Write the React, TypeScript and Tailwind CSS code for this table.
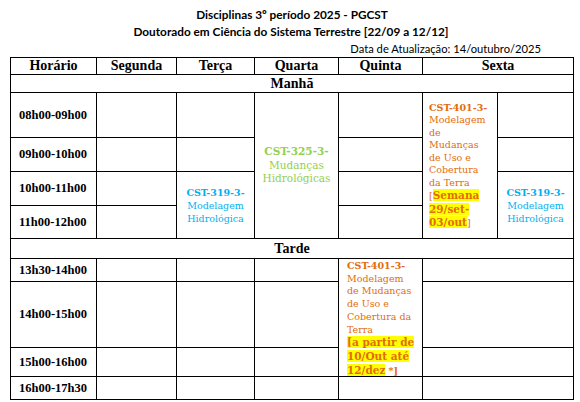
const serif = "font-['Liberation_Serif',serif]";
const slab = "font-['DejaVu_Serif',serif]";

function Cell({ children, className = "" }: { children?: React.ReactNode; className?: string }) {
  return <div className={`bg-white ${className}`}>{children}</div>;
}

function Time({ label }: { label: string }) {
  return (
    <Cell className={`flex items-center pl-[8px] ${serif} font-bold text-[12.5px] text-black`}>
      {label}
    </Cell>
  );
}

function Head({ label, className = "" }: { label: string; className?: string }) {
  return (
    <Cell className={`flex items-center justify-center ${serif} font-bold text-[14px] leading-none text-black ${className}`}>
      {label}
    </Cell>
  );
}

const hl = "bg-[#ffff00] font-bold text-[10.5px]";

export default function App() {
  return (
    <div className="w-[580px] h-[402px] bg-white overflow-hidden">
      {/* TITLES */}
      <div className="pt-[6px] font-['Lato',sans-serif] leading-[17px] text-black">
        <div className="text-center font-bold text-[11.8px] pl-[4px]">Disciplinas 3º período 2025 - PGCST</div>
        <div className="text-center font-bold text-[11.8px] pl-[2px]">Doutorado em Ciência do Sistema Terrestre [22/09 a 12/12]</div>
        <div className="text-right text-[11.2px] pr-[39px]">Data de Atualização: 14/outubro/2025</div>
      </div>

      {/* TABLE */}
      <div className="ml-[10px] w-[564px] grid grid-cols-[85px_79px_77px_83px_83px_74px_75px] grid-rows-[16px_17px_44px_33px_33px_32px_19px_22px_65px_28px_22px] gap-px bg-black border border-black">
        <Head label="Horário" />
        <Head label="Segunda" />
        <Head label="Terça" />
        <Head label="Quarta" />
        <Head label="Quinta" />
        <Head label="Sexta" className="col-span-2" />

        <Head label="Manhã" className="col-span-7" />

        {/* 08h */}
        <Time label="08h00-09h00" />
        <Cell />
        <Cell />
        <Cell className={`row-span-4 flex flex-col items-center justify-center text-center ${slab} text-[10.5px] leading-[13.5px] text-[#92d050]`}>
          <span className="font-bold">CST-325-3-</span>
          <span>Mudanças</span>
          <span>Hidrológicas</span>
        </Cell>
        <Cell />
        <Cell className={`row-span-4 flex flex-col justify-center pl-[6px] ${slab} text-[9.5px] leading-[12.5px] text-[#e36c0a]`}>
          <span className="font-bold">CST-401-3-</span>
          <span>Modelagem</span>
          <span>de</span>
          <span>Mudanças</span>
          <span>de Uso e</span>
          <span>Cobertura</span>
          <span>da Terra</span>
          <span>[<span className={hl}>Semana</span></span>
          <span><span className={hl}>29/set-</span></span>
          <span><span className={hl}>03/out</span>]</span>
        </Cell>
        <Cell />

        {/* 09h */}
        <Time label="09h00-10h00" />
        <Cell />
        <Cell />
        <Cell />
        <Cell />

        {/* 10h */}
        <Time label="10h00-11h00" />
        <Cell />
        <Cell className={`row-span-2 flex flex-col items-center justify-center text-center ${slab} text-[9.5px] leading-[13px] text-[#00b0f0]`}>
          <span className="font-bold">CST-319-3-</span>
          <span>Modelagem</span>
          <span>Hidrológica</span>
        </Cell>
        <Cell />
        <Cell className={`row-span-2 flex flex-col items-center justify-center text-center ${slab} text-[9.5px] leading-[13px] text-[#00b0f0]`}>
          <span className="font-bold">CST-319-3-</span>
          <span>Modelagem</span>
          <span>Hidrológica</span>
        </Cell>

        {/* 11h */}
        <Time label="11h00-12h00" />
        <Cell />
        <Cell />

        <Head label="Tarde" className="col-span-7" />

        {/* 13h30 */}
        <Time label="13h30-14h00" />
        <Cell />
        <Cell />
        <Cell />
        <Cell className={`row-span-3 flex flex-col pl-[8px] pt-[1px] ${slab} text-[9.5px] leading-[12.7px] text-[#e36c0a]`}>
          <span className="font-bold">CST-401-3-</span>
          <span>Modelagem</span>
          <span>de Mudanças</span>
          <span>de Uso e</span>
          <span>Cobertura da</span>
          <span>Terra</span>
          <span><span className={hl}>[a partir de</span></span>
          <span><span className={hl}>10/Out até</span></span>
          <span><span className={hl}>12/dez</span> <span className="font-bold">*]</span></span>
        </Cell>
        <Cell className="col-span-2" />

        {/* 14h */}
        <Time label="14h00-15h00" />
        <Cell />
        <Cell />
        <Cell />
        <Cell className="col-span-2" />

        {/* 15h */}
        <Time label="15h00-16h00" />
        <Cell />
        <Cell />
        <Cell />
        <Cell className="col-span-2" />

        {/* 16h */}
        <Time label="16h00-17h30" />
        <Cell />
        <Cell />
        <Cell />
        <Cell />
        <Cell className="col-span-2" />
      </div>
    </div>
  );
}
